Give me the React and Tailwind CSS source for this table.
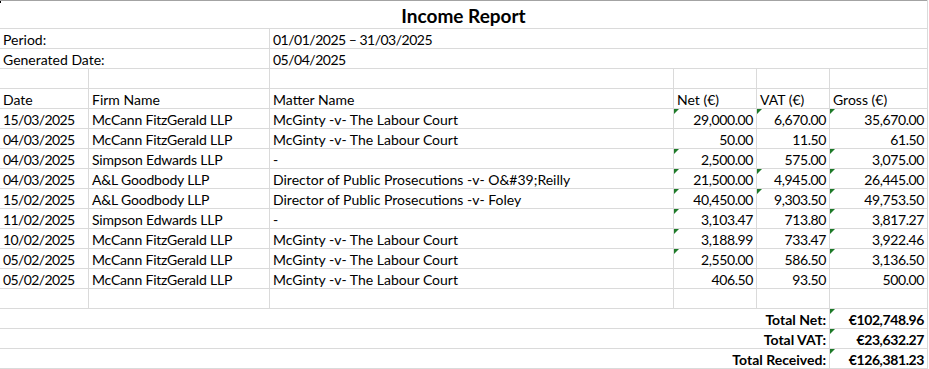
const rows = [
  ["15/03/2025", "McCann FitzGerald LLP", "McGinty -v- The Labour Court", "29,000.00", "6,670.00", "35,670.00", [1, 1, 1]],
  ["04/03/2025", "McCann FitzGerald LLP", "McGinty -v- The Labour Court", "50.00", "11.50", "61.50", [0, 0, 0]],
  ["04/03/2025", "Simpson Edwards LLP", "-", "2,500.00", "575.00", "3,075.00", [1, 0, 1]],
  ["04/03/2025", "A&L Goodbody LLP", "Director of Public Prosecutions -v- O&#39;Reilly", "21,500.00", "4,945.00", "26,445.00", [1, 1, 1]],
  ["15/02/2025", "A&L Goodbody LLP", "Director of Public Prosecutions -v- Foley", "40,450.00", "9,303.50", "49,753.50", [1, 1, 1]],
  ["11/02/2025", "Simpson Edwards LLP", "-", "3,103.47", "713.80", "3,817.27", [1, 0, 1]],
  ["10/02/2025", "McCann FitzGerald LLP", "McGinty -v- The Labour Court", "3,188.99", "733.47", "3,922.46", [1, 0, 1]],
  ["05/02/2025", "McCann FitzGerald LLP", "McGinty -v- The Labour Court", "2,550.00", "586.50", "3,136.50", [1, 0, 1]],
  ["05/02/2025", "McCann FitzGerald LLP", "McGinty -v- The Labour Court", "406.50", "93.50", "500.00", [0, 0, 0]],
];

const totals = [
  ["Total Net:", "€102,748.96"],
  ["Total VAT:", "€23,632.27"],
  ["Total Received:", "€126,381.23"],
];

function Flag() {
  return (
    <span className="absolute top-0 left-0 w-0 h-0 border-t-[5px] border-t-[#1d7a28] border-r-[5px] border-r-transparent" />
  );
}

function Row({ children }) {
  return <div className="flex h-[20px] border-b border-[#dadada]">{children}</div>;
}

function Cell({ className = "", right, bold, flag, children }) {
  return (
    <div
      className={
        "relative h-full shrink-0 flex items-end pb-[1px] px-[3px] whitespace-nowrap overflow-visible " +
        (right ? "justify-end " : "") +
        (bold ? "font-bold " : "") +
        className
      }
    >
      {flag ? <Flag /> : null}
      {children}
    </div>
  );
}

export default function App() {
  return (
    <div
      className="relative w-[929px] h-[369px] bg-white text-black text-[14px] leading-none overflow-hidden"
      style={{ fontFamily: "Lato, 'Liberation Sans', sans-serif" }}
    >
      <span className="absolute top-[1px] left-0 w-[1px] h-[2px] bg-black" />
      <div className="w-[928px] border-r border-[#dadada]">
        <div className="h-[29px] border-t border-[#a3a3a3] border-b border-b-[#dadada] flex items-end justify-center pb-[3px] text-[19px] font-bold">
          Income Report
        </div>

        <Row>
          <Cell className="w-[270px] border-r border-[#dadada]">Period:</Cell>
          <Cell className="flex-1 tracking-[-0.5px]">01/01/2025 – 31/03/2025</Cell>
        </Row>
        <Row>
          <Cell className="w-[270px] border-r border-[#dadada]">Generated Date:</Cell>
          <Cell className="flex-1 tracking-[-0.5px]">05/04/2025</Cell>
        </Row>
        <Row>
          <Cell className="w-[89px] border-r border-[#dadada]" />
          <Cell className="w-[181px] border-r border-[#dadada]" />
          <Cell className="w-[404px] border-r border-[#dadada]" />
          <Cell className="w-[83px] border-r border-[#dadada]" />
          <Cell className="w-[73px] border-r border-[#dadada]" />
          <Cell className="flex-1" />
        </Row>
        <Row>
          <Cell className="w-[89px] border-r border-[#dadada]">Date</Cell>
          <Cell className="w-[181px] border-r border-[#dadada]">Firm Name</Cell>
          <Cell className="w-[404px] border-r border-[#dadada]">Matter Name</Cell>
          <Cell className="w-[83px] border-r border-[#dadada]">Net (€)</Cell>
          <Cell className="w-[73px] border-r border-[#dadada]">VAT (€)</Cell>
          <Cell className="flex-1">Gross (€)</Cell>
        </Row>

        {rows.map((r, i) => (
          <Row key={i}>
            <Cell className="w-[89px] border-r border-[#dadada] tracking-[-0.6px]">{r[0]}</Cell>
            <Cell className="w-[181px] border-r border-[#dadada] tracking-[-0.2px]">{r[1]}</Cell>
            <Cell className="w-[404px] border-r border-[#dadada]">{r[2]}</Cell>
            <Cell className="w-[83px] border-r border-[#dadada] tracking-[-0.4px]" right flag={r[6][0]}>{r[3]}</Cell>
            <Cell className="w-[73px] border-r border-[#dadada] tracking-[-0.4px]" right flag={r[6][1]}>{r[4]}</Cell>
            <Cell className="flex-1 tracking-[-0.4px]" right flag={r[6][2]}>{r[5]}</Cell>
          </Row>
        ))}

        <Row>
          <Cell className="w-[89px] border-r border-[#dadada]" />
          <Cell className="w-[181px] border-r border-[#dadada]" />
          <Cell className="w-[404px] border-r border-[#dadada]" />
          <Cell className="w-[83px] border-r border-[#dadada]" />
          <Cell className="w-[73px] border-r border-[#dadada]" />
          <Cell className="flex-1" />
        </Row>

        {totals.map((t) => (
          <Row key={t[0]}>
            <Cell className="w-[830px] border-r border-[#dadada]" right bold>{t[0]}</Cell>
            <Cell className="flex-1 tracking-[-0.4px]" right bold flag>{t[1]}</Cell>
          </Row>
        ))}
      </div>
    </div>
  );
}
